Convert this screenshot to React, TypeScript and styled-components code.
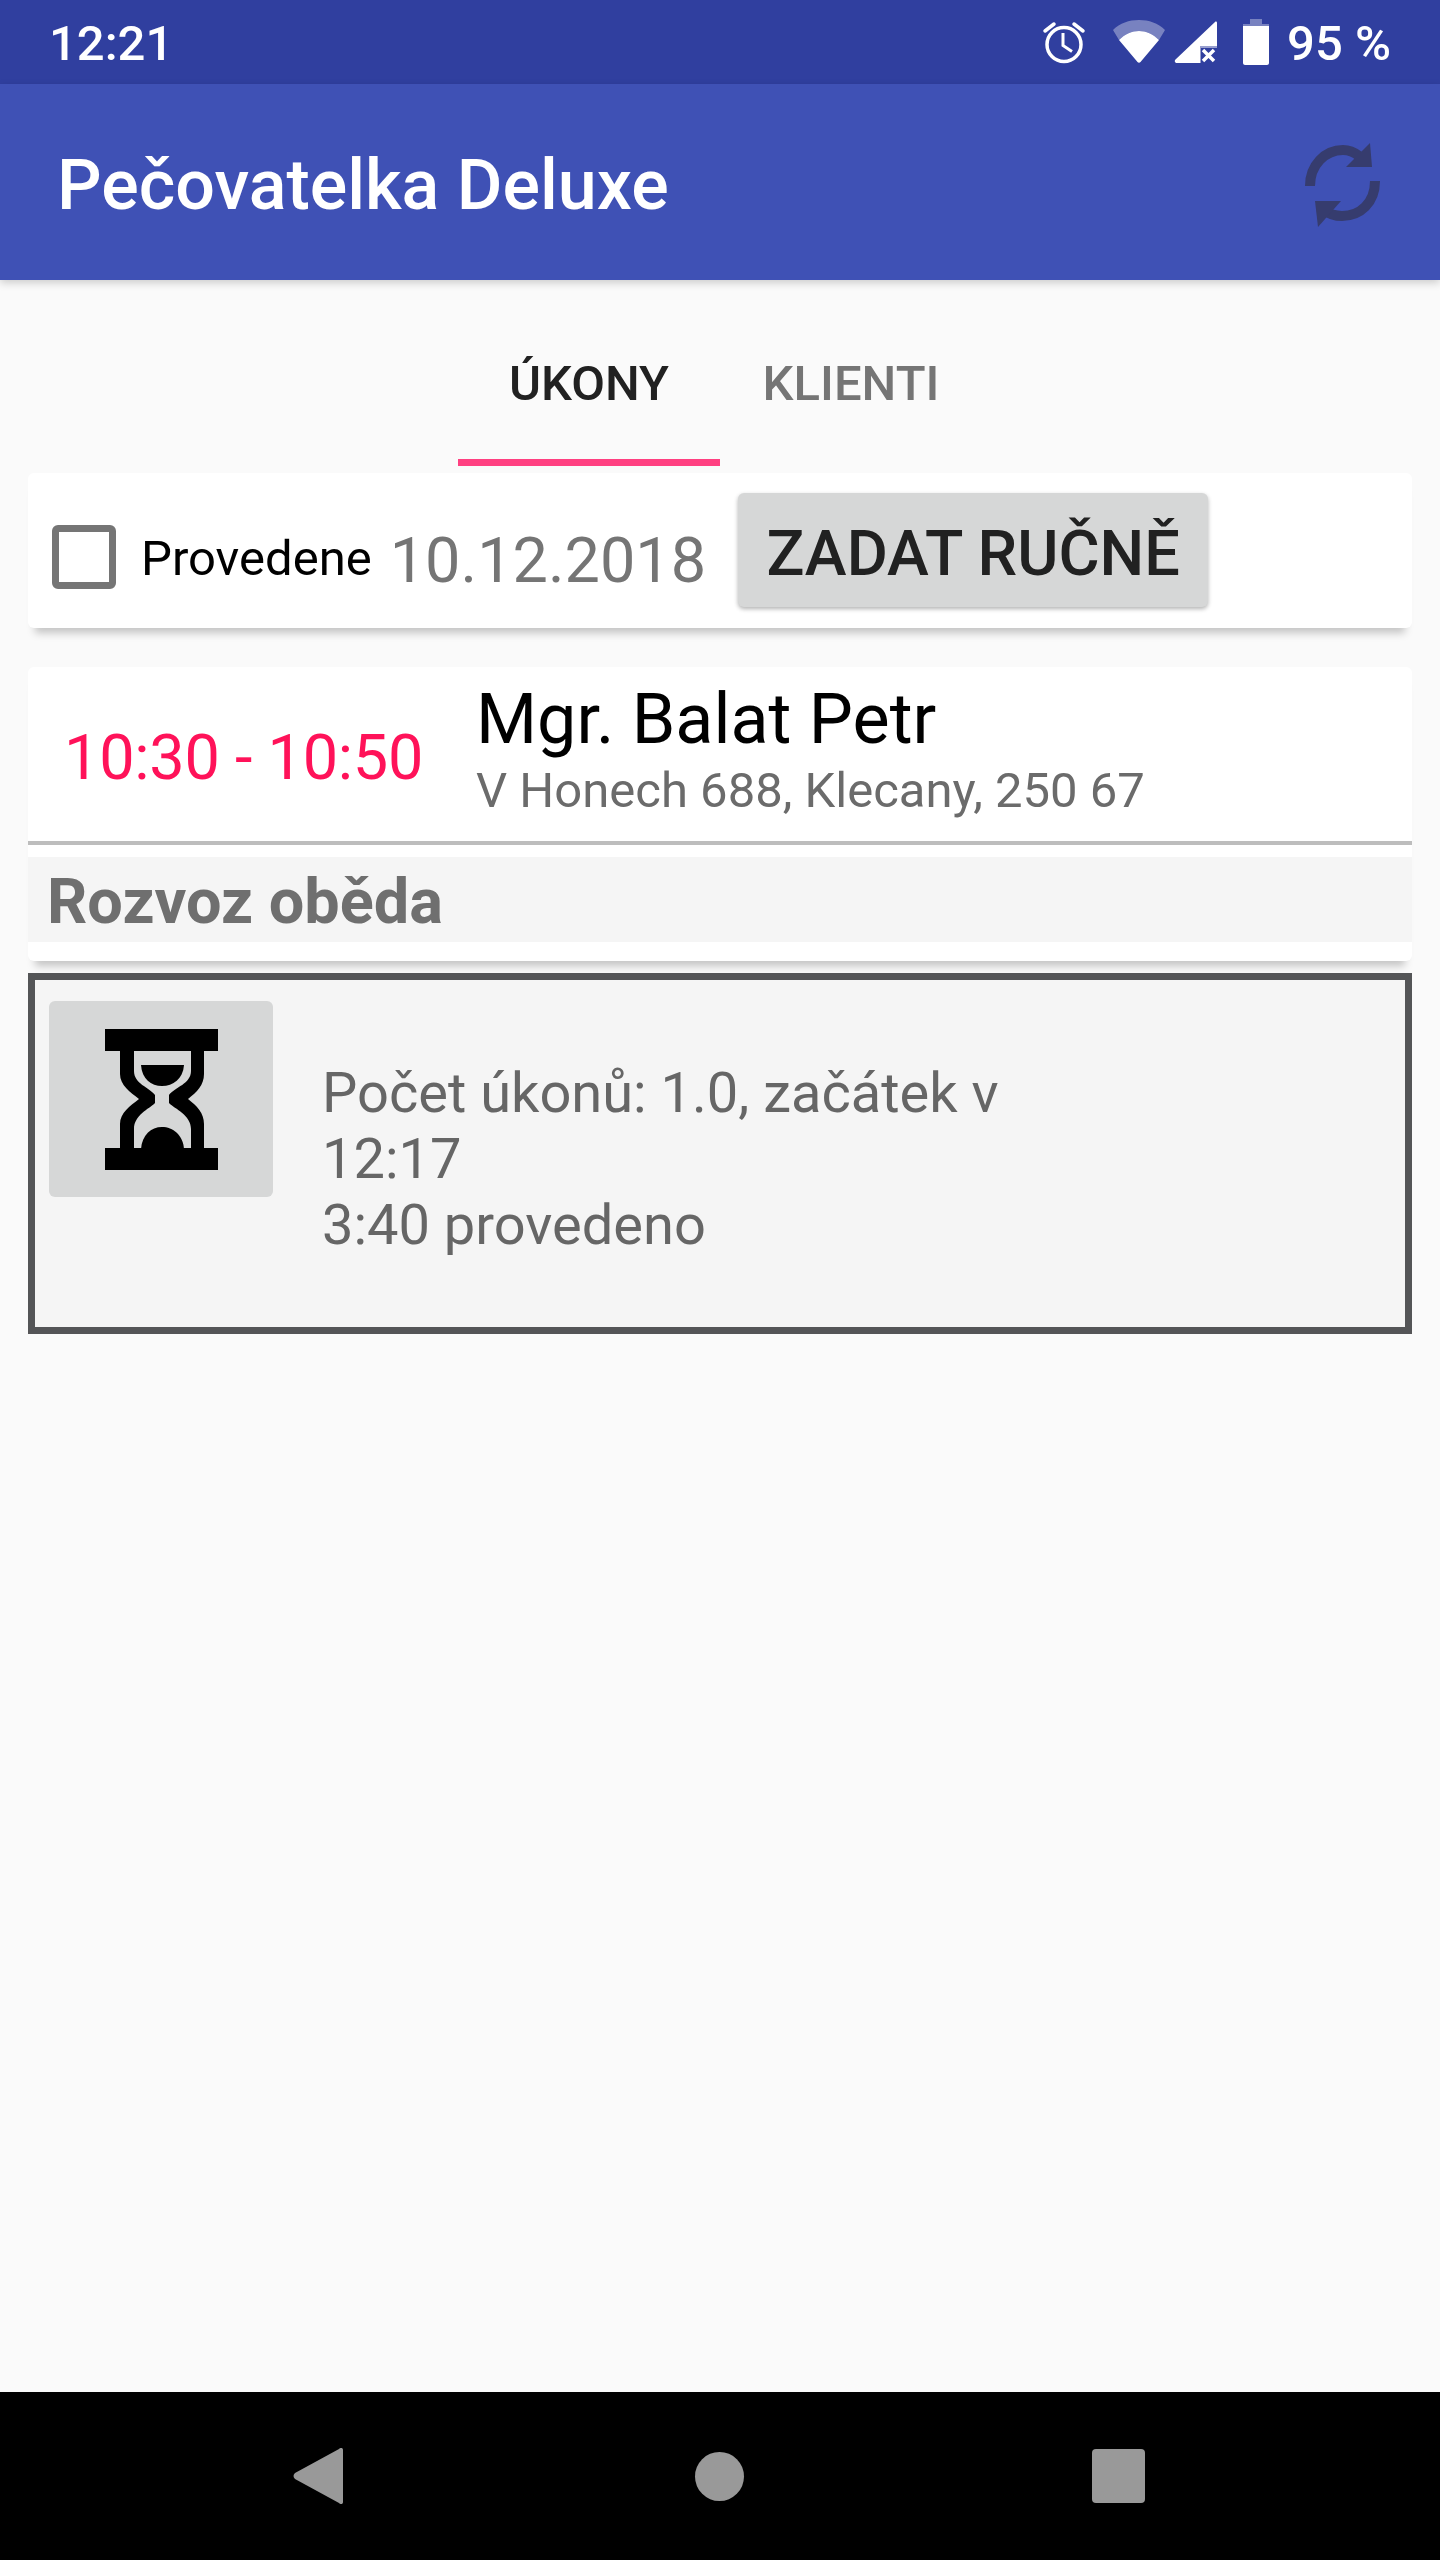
import React from "react";
import styled, { createGlobalStyle } from "styled-components";

const GlobalStyle = createGlobalStyle`
  html, body {
    margin: 0;
    padding: 0;
    background: #fafafa;
  }
  * {
    box-sizing: border-box;
  }
`;

export default function App() {
  return (
    <Screen>
      <GlobalStyle />
      <StatusBar>
        <Clock>12:21</Clock>
        <StatusIcons>
          <svg width="44" height="44" viewBox="0 0 44 44" fill="none" stroke="#fff">
            <circle cx="22" cy="24.5" r="17" strokeWidth="3.5" />
            <path d="M21 13v12.5l9 6" strokeWidth="3" />
            <path d="M3 11l9-7M41 11l-9-7" strokeWidth="3.5" strokeLinecap="round" />
          </svg>
          <WifiIcon width="54" height="44" viewBox="0 0 54 44">
            <path d="M1 10C8 3 17 0 27 0s19 3 26 10l-6 10C41 14 34 11 27 11S13 14 7 20z" fill="#fff" opacity=".35" />
            <path d="M7 20c6-6 13-9 20-9s14 3 20 9L28.500 42c-.8 1-2.200 1-3 0z" fill="#fff" />
          </WifiIcon>
          <SignalIcon width="43" height="42" viewBox="0 0 43 42">
            <path d="M41 1c.8-.8 2-.3 2 1v23H26v17H3c-2 0-3-2-1.500-3.500z" fill="#fff" />
            <path d="M25 25h18v2H27v15h-2z" fill="#fff" opacity=".5" />
            <path d="M29 29l11 11M40 29L29 40" stroke="#fff" strokeWidth="3.500" />
          </SignalIcon>
          <BatteryIcon width="26" height="46" viewBox="0 0 26 46">
            <path d="M7 0h12v5h7v2H0V5h7z" fill="#fff" opacity=".35" />
            <path d="M0 7h26v37c0 1-1 2-2 2H2c-1 0-2-1-2-2z" fill="#fff" />
          </BatteryIcon>
          <Percent>95 %</Percent>
        </StatusIcons>
      </StatusBar>

      <AppBar>
        <Title>Pečovatelka Deluxe</Title>
        <svg width="78" height="84" viewBox="0 0 78 84" fill="none" stroke="#363c6e">
          <path d="M5 43C5 22 20 7 38 7c6 0 11 2 16 6" strokeWidth="10" />
          <path d="M65 0l2 24H41z" fill="#363c6e" stroke="none" />
          <path d="M70 38C70 60 55 73 37 73c-8 0-13-2-18-6" strokeWidth="10" />
          <path d="M10 58h26L13 84z" fill="#363c6e" stroke="none" />
        </svg>
      </AppBar>

      <Tabs>
        <Tab $active>ÚKONY</Tab>
        <Tab>KLIENTI</Tab>
      </Tabs>

      <FilterCard>
        <CheckBox />
        <CheckLabel>Provedene</CheckLabel>
        <DateText>10.12.2018</DateText>
        <ManualButton>ZADAT RUČNĚ</ManualButton>
      </FilterCard>

      <VisitCard>
        <VisitRow>
          <TimeRange>10:30 - 10:50</TimeRange>
          <Person>
            <PersonName>Mgr. Balat Petr</PersonName>
            <Address>V Honech 688, Klecany, 250 67</Address>
          </Person>
        </VisitRow>
        <SectionTitle>Rozvoz oběda</SectionTitle>
      </VisitCard>

      <TaskBox>
        <TimerButton>
          <svg width="113" height="141" viewBox="0 0 113 141">
            <path d="M0 0H113V22H99V45C99 56 92 63 83 70C92 77 99 84 99 95V119H113V141H0V119H15V95C15 84 25 77 34 70C25 63 15 56 15 45V22H0Z" />
            <path d="M29 22H86V42C86 55 70 58 64 66V74C70 80 86 86 86 100V119H29V100C29 86 44 80 50 74V66C44 58 29 55 29 42Z" fill="#d6d7d7" />
            <path d="M36 36H79C78 50 68 57 57 57C46 57 37 50 36 36Z" />
            <path d="M36 120C37 106 46 98 57 98C68 98 78 106 79 120Z" />
          </svg>
        </TimerButton>
        <TaskText>
          Počet úkonů: 1.0, začátek v<br />
          12:17<br />
          3:40 provedeno
        </TaskText>
      </TaskBox>

      <Spacer />

      <NavBar>
        <svg width="50" height="56" viewBox="0 0 50 56" fill="#999">
          <path d="M46 1c2-2 4-1 4 1v52c0 2-2 3-4 1L2 31c-2-2-2-4 0-6z" />
        </svg>
        <HomeDot />
        <RecentSquare />
      </NavBar>
    </Screen>
  );
}

const Screen = styled.div`
  width: 1440px;
  height: 2560px;
  display: flex;
  flex-direction: column;
  background: #fafafa;
  font-family: Roboto, "Liberation Sans", sans-serif;
  overflow: hidden;
`;

const StatusBar = styled.div`
  height: 84px;
  flex: none;
  display: flex;
  align-items: center;
  justify-content: space-between;
  padding: 0 49px;
  background: #303f9f;
  color: #fff;
`;

const Clock = styled.div`
  margin-top: 3px;
  font-size: 49px;
  font-weight: 500;
`;

const StatusIcons = styled.div`
  display: flex;
  align-items: center;
`;

const WifiIcon = styled.svg`
  margin-left: 26px;
`;

const SignalIcon = styled.svg`
  margin-left: 8px;
`;

const BatteryIcon = styled.svg`
  margin-left: 26px;
`;

const Percent = styled.div`
  margin: 3px 0 0 18px;
  font-size: 49px;
  font-weight: 500;
  white-space: pre;
`;

const AppBar = styled.div`
  position: relative;
  z-index: 1;
  height: 196px;
  flex: none;
  display: flex;
  align-items: center;
  justify-content: space-between;
  padding: 6px 57px 0 57px;
  background: #3f51b5;
  box-shadow: 0 3px 8px rgba(0, 0, 0, 0.18);
`;

const Title = styled.div`
  font-size: 70px;
  font-weight: 500;
  color: #fff;
`;

const Tabs = styled.div`
  height: 186px;
  flex: none;
  display: flex;
  justify-content: center;
`;

const Tab = styled.div<{ $active?: boolean }>`
  width: 262px;
  padding-top: 28px;
  display: flex;
  align-items: center;
  justify-content: center;
  font-size: 49px;
  font-weight: 500;
  color: ${(p) => (p.$active ? "#212121" : "#757575")};
  border-bottom: 7px solid ${(p) => (p.$active ? "#ff4081" : "transparent")};
`;

const FilterCard = styled.div`
  height: 155px;
  flex: none;
  margin: 7px 28px 0;
  padding: 0 24px;
  display: flex;
  align-items: center;
  background: #fff;
  border-radius: 6px;
  box-shadow: 0 12px 8px -7px rgba(0, 0, 0, 0.22);
`;

const CheckBox = styled.div`
  width: 64px;
  height: 64px;
  flex: none;
  margin-top: 12px;
  border: 7px solid #757575;
  border-radius: 6px;
`;

const CheckLabel = styled.div`
  margin-left: 25px;
  margin-top: 16px;
  font-size: 49px;
  color: #000;
`;

const DateText = styled.div`
  margin-left: 18px;
  margin-top: 20px;
  font-size: 63px;
  color: #757575;
`;

const ManualButton = styled.button`
  margin-left: 32px;
  margin-bottom: 1px;
  width: 470px;
  height: 114px;
  border: 0;
  border-radius: 6px;
  padding: 6px 0 0;
  background: #d6d7d7;
  color: #212121;
  font-family: inherit;
  font-size: 63px;
  font-weight: 500;
  box-shadow: 0 2px 4px rgba(0, 0, 0, 0.3);
`;

const VisitCard = styled.div`
  height: 294px;
  flex: none;
  margin: 39px 28px 0;
  display: flex;
  flex-direction: column;
  background: #fff;
  border-radius: 6px;
  box-shadow: 0 12px 8px -7px rgba(0, 0, 0, 0.22);
`;

const VisitRow = styled.div`
  height: 178px;
  flex: none;
  display: flex;
  align-items: center;
  padding-left: 36px;
  border-bottom: 4px solid #bdbdbd;
`;

const TimeRange = styled.div`
  width: 412px;
  flex: none;
  margin-top: 6px;
  font-size: 63px;
  letter-spacing: -0.25px;
  color: #ff1259;
`;

const Person = styled.div`
  margin-top: -8px;
  display: flex;
  flex-direction: column;
`;

const PersonName = styled.div`
  font-size: 70px;
  line-height: 78px;
  color: #000;
`;

const Address = styled.div`
  margin-top: 4px;
  font-size: 49px;
  line-height: 58px;
  color: #6b6b6b;
`;

const SectionTitle = styled.div`
  height: 85px;
  flex: none;
  margin-top: 12px;
  padding: 4px 0 0 19px;
  display: flex;
  align-items: center;
  background: #f5f5f5;
  color: #6f6f6f;
  font-size: 63px;
  font-weight: 700;
`;

const TaskBox = styled.div`
  height: 361px;
  flex: none;
  margin: 12px 28px 0;
  padding: 21px 14px;
  display: flex;
  align-items: flex-start;
  background: #f5f5f5;
  border: 7px solid #545557;
`;

const TimerButton = styled.div`
  width: 224px;
  height: 196px;
  flex: none;
  display: flex;
  align-items: center;
  justify-content: center;
  background: #d6d7d7;
  border-radius: 6px;
`;

const TaskText = styled.div`
  margin: 59px 0 0 49px;
  font-size: 56px;
  line-height: 66px;
  color: #666;
`;

const Spacer = styled.div`
  flex: 1;
`;

const NavBar = styled.div`
  height: 168px;
  flex: none;
  padding-left: 293px;
  display: flex;
  align-items: center;
  background: #000;
`;

const HomeDot = styled.div`
  width: 49px;
  height: 49px;
  margin-left: 352px;
  border-radius: 50%;
  background: #999;
`;

const RecentSquare = styled.div`
  width: 53px;
  height: 54px;
  margin-left: 348px;
  border-radius: 4px;
  background: #999;
`;
